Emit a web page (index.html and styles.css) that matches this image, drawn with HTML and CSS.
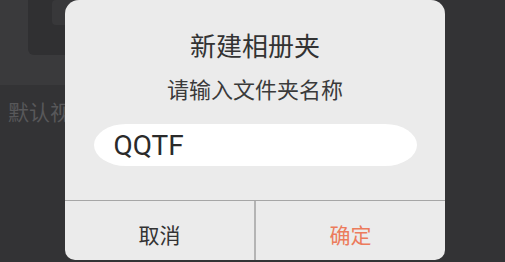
FILE: index.html
```html
<!DOCTYPE html>
<html lang="zh-CN">
<head>
    <meta charset="UTF-8">
    <meta name="viewport" content="width=device-width, initial-scale=1.0">
    <title>新建相册夹</title>
    <link rel="stylesheet" href="styles.css">
</head>
<body>

    <div class="album-list">
        <div class="album-card">
            <div class="album-cover">
                <div class="album-cover-inner"></div>
            </div>
        </div>
        <div class="album-name">默认视频</div>
    </div>

    <div class="dialog">
        <div class="dialog-body">
            <h2 class="dialog-title">新建相册夹</h2>
            <p class="dialog-tip">请输入文件夹名称</p>
            <input type="text" class="dialog-input" value="QQTF">
        </div>
        <div class="dialog-buttons">
            <button class="btn-cancel">取消</button>
            <button class="btn-ok">确定</button>
        </div>
    </div>

</body>
</html>
```

FILE: styles.css
```css
body {
    margin: 0;
    padding: 0;
    width: 505px;
    height: 262px;
    overflow: hidden;
    background-color: #333335;
    font-family: "Noto Sans CJK SC", "Noto Sans", sans-serif;
    position: relative;
}

.album-list {
    padding: 0;
}

.album-card {
    width: 90px;
    height: 85px;
    background-color: #3a3a3c;
    border-radius: 0 0 6px 0;
    position: relative;
    overflow: hidden;
}

.album-cover {
    position: absolute;
    left: 28px;
    top: -10px;
    width: 60px;
    height: 65px;
    background-color: #303032;
    border-radius: 6px;
}

.album-cover-inner {
    margin: 10px 0 0 24px;
    width: 40px;
    height: 25px;
    background-color: #38383a;
    border-radius: 4px;
}

.album-name {
    margin: 11px 0 0 8px;
    font-size: 21px;
    line-height: 30px;
    color: #58585a;
}

.dialog {
    position: absolute;
    left: 65px;
    top: 0;
    width: 380px;
    height: 260px;
    background-color: #ebebeb;
    border-radius: 14px 14px 10px 10px;
    display: flex;
    flex-direction: column;
    overflow: hidden;
}

.dialog-body {
    height: 201px;
    border-bottom: 1px solid #a6a6a6;
    box-sizing: border-box;
    display: flex;
    flex-direction: column;
    align-items: center;
}

.dialog-title {
    margin: 27px 0 0 0;
    font-size: 26px;
    font-weight: normal;
    line-height: 36px;
    color: #333333;
}

.dialog-tip {
    margin: 10px 0 0 0;
    font-size: 22px;
    line-height: 30px;
    color: #3a3a3a;
}

.dialog-input {
    margin: 21px 0 0 0;
    width: 323px;
    height: 42px;
    box-sizing: border-box;
    border: none;
    outline: none;
    border-radius: 32px / 21px;
    background-color: #ffffff;
    padding: 0 0 0 20px;
    font-family: Roboto, "Noto Sans", sans-serif;
    font-size: 28px;
    color: #2a2a2a;
}

.dialog-buttons {
    flex: 1;
    display: flex;
}

.dialog-buttons button {
    flex: 1;
    border: none;
    background: none;
    font-family: "Noto Sans CJK SC", "Noto Sans", sans-serif;
    font-size: 21px;
    padding: 6px 0 0 0;
}

.btn-cancel {
    color: #333333;
    border-right: 2px solid #b4b4b4 !important;
}

.btn-ok {
    color: #ec7b5c;
}
```
